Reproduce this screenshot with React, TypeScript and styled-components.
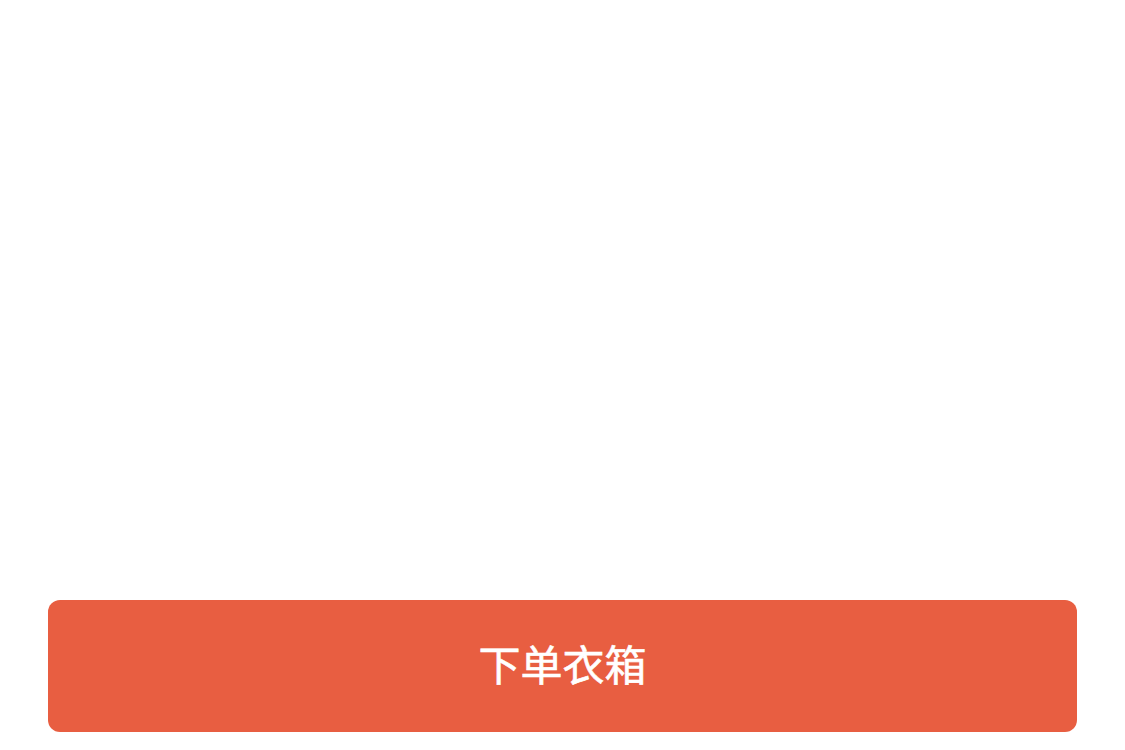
import styled, { createGlobalStyle } from 'styled-components';

const GlobalStyle = createGlobalStyle`
    html, body {
        margin: 0;
        padding: 0;
        background: #fff;
    }

    body {
        font-family: 'Noto Sans CJK SC', 'Noto Sans', sans-serif;
    }
`;

const Page = styled.div`
    min-height: 750px;
    box-sizing: border-box;
    display: flex;
    flex-direction: column;
    justify-content: flex-end;
    padding: 0 48px 18px;
`;

const OrderButton = styled.button`
    height: 132px;
    width: 100%;
    border: none;
    border-radius: 12px;
    background: #e85e41;
    color: #fff;
    font-family: inherit;
    font-size: 42px;
    font-weight: 400;
    -webkit-text-stroke: 0.6px #fff;
    line-height: 1;
    padding: 0 0 7px;
    display: flex;
    align-items: center;
    justify-content: center;
    cursor: pointer;
`;

const App = () => {
    return (
        <>
            <GlobalStyle />
            <Page>
                <OrderButton>下单衣箱</OrderButton>
            </Page>
        </>
    );
};

export default App;
